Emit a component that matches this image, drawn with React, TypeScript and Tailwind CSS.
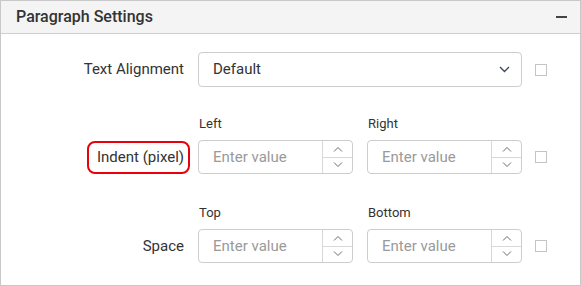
import React from "react"

const ChevronUp = () => (
  <svg width="10" height="6" viewBox="0 0 10 6" fill="none" stroke="#6b6b6b" strokeWidth="1">
    <path d="M1 5.5 5 1.5 9 5.5" />
  </svg>
)

const ChevronDown = () => (
  <svg width="10" height="6" viewBox="0 0 10 6" fill="none" stroke="#6b6b6b" strokeWidth="1">
    <path d="M1 0.5 5 4.5 9 0.5" />
  </svg>
)

function NumberBox({ label }: { label: string }) {
  return (
    <div className="flex flex-col">
      <span className="text-[13px] leading-4 text-[#333] mb-2 pl-[1px]">{label}</span>
      <div className="flex w-[155px] h-[34px] border border-[#cdcdcd] rounded-[4px] bg-white">
        <input
          className="flex-1 min-w-0 pl-[14px] text-[15px] text-[#333] placeholder-[#9a9a9a] outline-none bg-transparent"
          placeholder="Enter value"
        />
        <div className="w-[30px] flex flex-col border-l border-[#d8d8d8]">
          <div className="flex-1 flex items-center justify-center">
            <ChevronUp />
          </div>
          <div className="flex-1 flex items-center justify-center border-t border-[#d8d8d8]">
            <ChevronDown />
          </div>
        </div>
      </div>
    </div>
  )
}

const Checkbox = () => <div className="w-[12px] h-[12px] border border-[#c4c4c4] bg-white" />

export default function App() {
  return (
    <div className="w-[581px] h-[286px] bg-white" style={{ fontFamily: "Roboto, 'Liberation Sans', sans-serif" }}>
      <div className="h-full border border-[#c8c8c8] flex flex-col">
        {/* Header */}
        <div className="h-[33px] bg-[#f4f4f4] border-b border-[#cfcfcf] flex items-center justify-between pl-[15px] pr-[13px]">
          <span className="text-[16px] font-medium text-[#333]">Paragraph Settings</span>
          <div className="w-[11px] h-[2px] bg-[#444]" />
        </div>

        <div className="flex flex-col pt-[18px]">
          {/* Text alignment */}
          <div className="flex items-center">
            <div className="w-[183px] text-right text-[15px] text-[#333]">Text Alignment</div>
            <div className="ml-[14px] w-[324px] h-[35px] border border-[#cdcdcd] rounded-[4px] flex items-center justify-between pl-[14px] pr-[11px]">
              <span className="text-[15px] text-[#333]">Default</span>
              <svg width="11" height="7" viewBox="0 0 11 7" fill="none" stroke="#3f4a5a" strokeWidth="1.4">
                <path d="M1 1 5.5 5.5 10 1" />
              </svg>
            </div>
            <div className="ml-[13px]">
              <Checkbox />
            </div>
          </div>

          {/* Indent */}
          <div className="flex items-end mt-[29px]">
            <div className="w-[183px] h-[34px] flex items-center justify-end">
              <span className="inline-flex items-center h-[33px] border-2 border-[#e8000b] rounded-[8px] pl-[8px] pr-[4px] -mr-[6px] text-[15px] text-[#333]">
                Indent (pixel)
              </span>
            </div>
            <div className="ml-[14px] flex gap-[14px]">
              <NumberBox label="Left" />
              <NumberBox label="Right" />
            </div>
            <div className="ml-[13px] h-[34px] flex items-center">
              <Checkbox />
            </div>
          </div>

          {/* Space */}
          <div className="flex items-end mt-[31px]">
            <div className="w-[183px] h-[34px] flex items-center justify-end text-[15px] text-[#333]">Space</div>
            <div className="ml-[14px] flex gap-[14px]">
              <NumberBox label="Top" />
              <NumberBox label="Bottom" />
            </div>
            <div className="ml-[13px] h-[34px] flex items-center">
              <Checkbox />
            </div>
          </div>
        </div>
      </div>
    </div>
  )
}
